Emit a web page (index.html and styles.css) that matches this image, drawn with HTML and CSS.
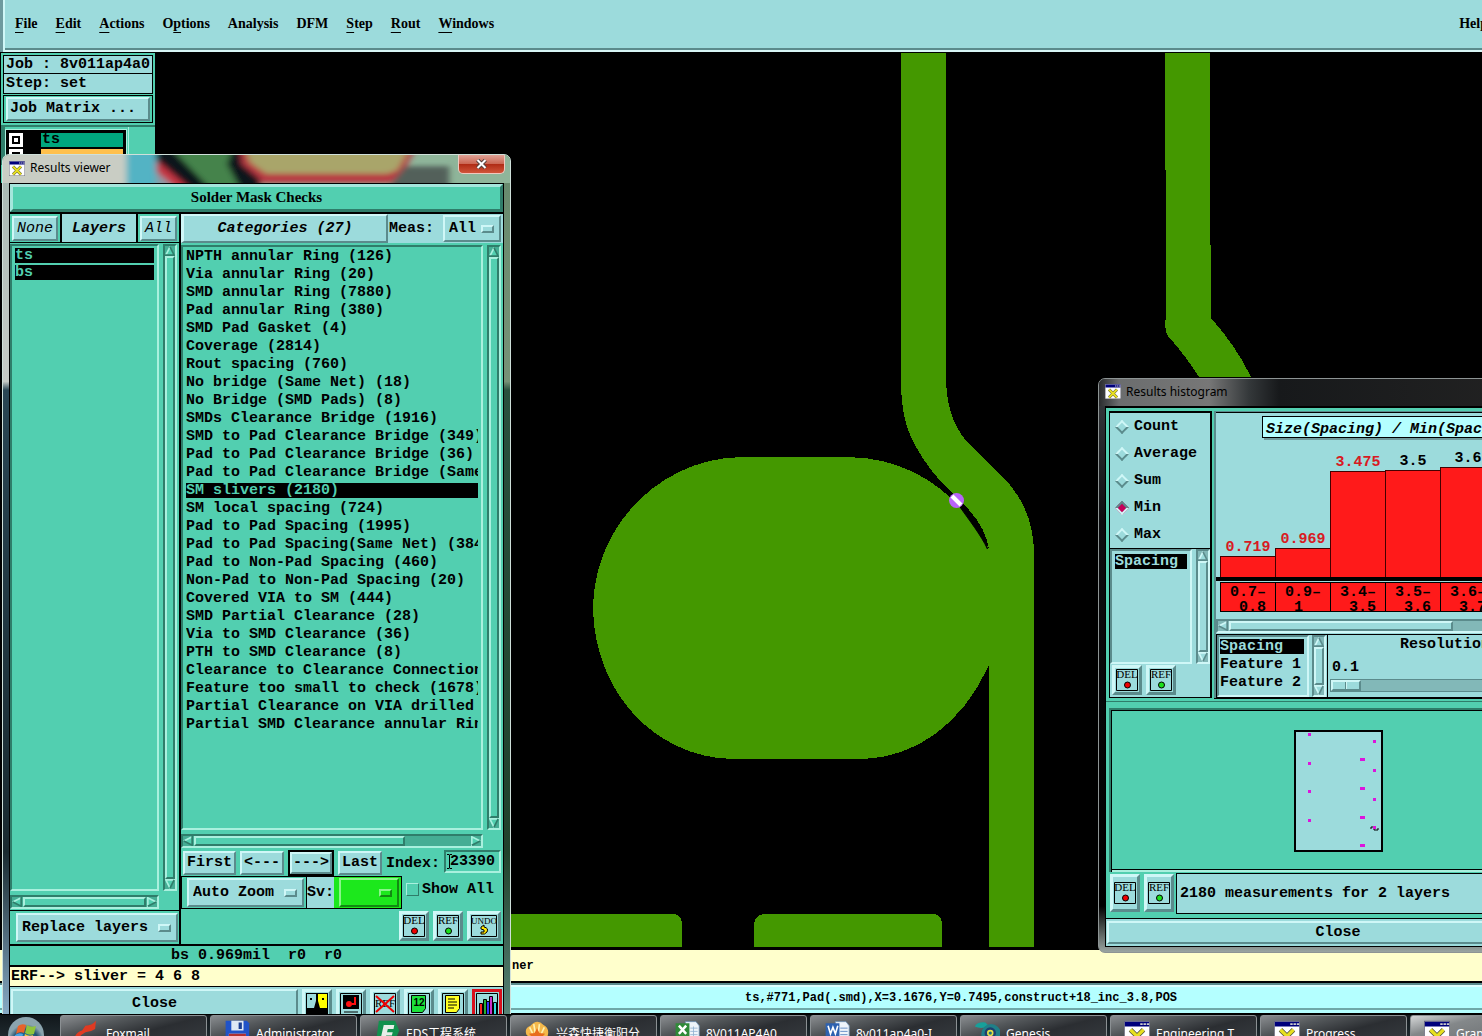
FILE: index.html
```html
<!DOCTYPE html>
<html lang="en">
<head>
<meta charset="utf-8">
<title>Results viewer</title>
<link rel="stylesheet" href="styles.css">
</head>
<body>
<svg class="defs" aria-hidden="true">
  <symbol id="up" viewBox="0 0 12 12"><path d="M6 0 12 12H0z" fill="var(--bg)"/><path d="M6 1 1 11" stroke="var(--hi)" stroke-width="2"/><path d="M6 1 11 11H0" stroke="var(--lo)" stroke-width="2" fill="none"/></symbol>
  <symbol id="down" viewBox="0 0 12 12"><path d="M0 0H12L6 12z" fill="var(--bg)"/><path d="M6 11 1 1H12" stroke="var(--hi)" stroke-width="2" fill="none"/><path d="M6 11 11 1" stroke="var(--lo)" stroke-width="2"/></symbol>
  <symbol id="left" viewBox="0 0 12 12"><path d="M0 6 12 0V12z" fill="var(--bg)"/><path d="M1 6 11 1" stroke="var(--hi)" stroke-width="2"/><path d="M1 6 11 11V0" stroke="var(--lo)" stroke-width="2" fill="none"/></symbol>
  <symbol id="right" viewBox="0 0 12 12"><path d="M12 6 0 0V12z" fill="var(--bg)"/><path d="M11 6 1 1V12" stroke="var(--hi)" stroke-width="2" fill="none"/><path d="M11 6 1 11" stroke="var(--lo)" stroke-width="2"/></symbol>
  <symbol id="xwin" viewBox="0 0 32 30"><path d="M0 0H32V30H0z" fill="#fff" stroke="#667" stroke-width="2"/><path d="M1 1H31V7H1z" fill="#00007c"/><path d="M20 3h3v2h-3zM24 3h3v2h-3zM28 3h3v2h-3z" fill="#ccc"/><path d="M8 11 24 27M24 11 8 27" stroke="#554" stroke-width="6"/><path d="M8 11 24 27M24 11 8 27" stroke="#e8e020" stroke-width="4"/></symbol>
</svg>
<div class="desktop">
  <nav class="menubar">
    <a href="#"><u>F</u>ile</a><a href="#"><u>E</u>dit</a><a href="#"><u>A</u>ctions</a><a href="#">O<u>p</u>tions</a><a href="#">Analysis</a><a href="#">DFM</a><a href="#"><u>S</u>tep</a><a href="#"><u>R</u>out</a><a href="#"><u>W</u>indows</a><a href="#" class="help">Help</a>
  </nav>

  <main class="stage">
    <svg class="board" viewBox="0 52 1482 897" preserveAspectRatio="xMinYMin slice" aria-label="Board view">
      <g fill="#449800" shape-rendering="crispEdges">
        <path d="M901 53H946V380C947 410 955 430 971 446L1001 475C1023 497 1034 522 1034 555V947H989V549C987 535 979 519 960 500C944 485 933 475 919 452C906 432 901 410 901 380z"/>
        <path d="M742 457H848C915 458 962 497 989 549V665C962 725 915 757 864 759H732C653 757 594 690 593 608C594 526 660 458 742 457z"/>
        <path d="M1165 53H1210V169L1211 318C1226 335 1240 354 1251 377H1199Q1185 355 1168 336Q1165 331 1165 322L1166 318V170H1165z"/>
        <path d="M500 914H672Q682 914 682 924V947H500z"/>
        <path d="M754 947V926Q754 914 766 914H932Q942 914 942 924V947z"/>
      </g>
      <path d="M961 505C976 520 982 530 987.500 549C981 535 969 520 960 507z" fill="#000" stroke="#000"/>
      <circle cx="956.500" cy="500.500" r="7.500" fill="#b964fa"/><path d="M952 496 961 505" stroke="#fff" stroke-width="4"/>
    </svg>

    <aside class="jobpanel green">
      <p class="jobline">Job : 8v011ap4a0</p>
      <p class="jobline">Step: set</p>
      <div class="matrix"><button class="btn cyan">Job Matrix ...</button></div>
      <div class="layerbox">
        <ul class="layerlist">
          <li><i class="tick"></i><span class="swatch teal">ts</span></li>
          <li><i class="tick"></i><span class="swatch amber"></span></li>
        </ul>
      </div>
    </aside>
  </main>

  <section class="window viewer">
    <header class="titlebar">
      <svg class="glass" viewBox="0 0 509 30" preserveAspectRatio="none" aria-hidden="true">
        <defs><filter id="soft" x="-10%" y="-50%" width="120%" height="200%"><feGaussianBlur stdDeviation="3"/></filter></defs>
        <path d="M0 0H509V30H0z" fill="#8fb59a"/>
        <g filter="url(#soft)"><path d="M-10-10H124V40H-10z" fill="#c9cdc4"/><path d="M124-10H154V40H124z" fill="#52b3c4"/><path d="M154-10H236L246 40H154z" fill="#45834b"/><path d="M154 10 182 36H154z" fill="#8b9aa6"/><path d="M154 2 192 36H174L154 18z" fill="#c43443"/><path d="M154-10H166L210 38H190L154 5z" fill="#10151b"/><path d="M232-10H416L400 22 388 30H254L238 10z" fill="#b83842"/><path d="M242-10H410L396 16 386 20H264L248 8z" fill="#a9a56b"/><path d="M230-6H238L240 10 258 26V40H240L225 10z" fill="#11141a"/><path d="M404 12H448V38H384z" fill="#53605a"/></g>
      </svg>
      <svg class="appicon"><use href="#xwin"/></svg><h2>Results viewer</h2>
      <button class="closer" aria-label="Close window"><svg viewBox="0 0 12 10"><path d="M2 1 10 9M10 1 2 9" stroke="#54403c" stroke-width="4"/><path d="M2 1 10 9M10 1 2 9" stroke="#fff" stroke-width="2"/></svg></button>
    </header>
    <div class="viewbody green">
      <div class="bar checks"><h3>Solder Mask Checks</h3></div>
      <div class="split">
        <div class="layers">
          <div class="tabs">
            <span class="tab"><button class="btn cyan slim">None</button></span>
            <strong>Layers</strong>
            <span class="tab"><button class="btn cyan slim">All</button></span>
          </div>
          <div class="scrollgrid">
            <ul class="list"><li class="on">ts</li><li class="on">bs</li></ul>
            <div class="scroll vert"><svg><use href="#up"/></svg><i></i><svg><use href="#down"/></svg></div>
            <div class="scroll horz"><svg><use href="#left"/></svg><i></i><svg><use href="#right"/></svg></div>
          </div>
          <div class="replace"><label class="pick cyan"><select aria-label="Layer mode"><option>Replace layers</option></select></label></div>
        </div>
        <div class="cats">
          <div class="cathead">
            <button class="btn cyan heading">Categories (27)</button>
            <label for="meas">Meas:</label>
            <span class="pick cyan"><select id="meas"><option>All</option></select></span>
          </div>
          <div class="scrollgrid wide">
            <ul class="list">
              <li>NPTH annular Ring (126)</li><li>Via annular Ring (20)</li><li>SMD annular Ring (7880)</li><li>Pad annular Ring (380)</li><li>SMD Pad Gasket (4)</li><li>Coverage (2814)</li><li>Rout spacing (760)</li><li>No bridge (Same Net) (18)</li><li>No Bridge (SMD Pads) (8)</li><li>SMDs Clearance Bridge (1916)</li><li>SMD to Pad Clearance Bridge (349)</li><li>Pad to Pad Clearance Bridge (36)</li><li>Pad to Pad Clearance Bridge (Same</li><li class="on">SM slivers (2180)</li><li>SM local spacing (724)</li><li>Pad to Pad Spacing (1995)</li><li>Pad to Pad Spacing(Same Net) (384</li><li>Pad to Non-Pad Spacing (460)</li><li>Non-Pad to Non-Pad Spacing (20)</li><li>Covered VIA to SM (444)</li><li>SMD Partial Clearance (28)</li><li>Via to SMD Clearance (36)</li><li>PTH to SMD Clearance (8)</li><li>Clearance to Clearance Connection</li><li>Feature too small to check (1678)</li><li>Partial Clearance on VIA drilled</li><li>Partial SMD Clearance annular Rin</li>
            </ul>
            <div class="scroll vert"><svg><use href="#up"/></svg><i></i><svg><use href="#down"/></svg></div>
            <div class="scroll horz part"><svg><use href="#left"/></svg><i></i><svg><use href="#right"/></svg></div>
          </div>
          <div class="steps">
            <button class="btn cyan">First</button><button class="btn cyan">&lt;---</button><button class="btn cyan default">---&gt;</button><button class="btn cyan">Last</button>
            <label for="index">Index:</label><span class="entry"><input id="index" type="text" value="23390"><svg class="beam" width="5" height="15" aria-hidden="true"><path d="M0 .5h2l.5.5.5-.5h2M2.500 1v13M0 14.500h2l.5-.5.5.5h2" fill="none" stroke="#000"/></svg></span>
          </div>
          <div class="options">
            <span class="optbox"><label class="pick cyan"><select aria-label="Zoom mode"><option>Auto Zoom</option></select></label></span>
            <span class="optbox sv"><label for="sv">Sv:</label><span class="pick lime"><select id="sv"><option></option></select></span></span>
            <label class="showall"><input type="checkbox">Show All</label>
          </div>
          <div class="actions">
            <button class="iconbtn cyan" aria-label="Delete"><svg width="22" height="22"><path d="M.5.5h21v21H.5z" fill="none" stroke="#000"/><text x="11" y="9" class="glyph">DEL</text><circle cx="11.500" cy="16" r="3" fill="#e00" stroke="#000"/></svg></button>
            <button class="iconbtn cyan" aria-label="Reference"><svg width="22" height="22"><path d="M.5.5h21v21H.5z" fill="none" stroke="#000"/><text x="11" y="9" class="glyph">REF</text><circle cx="11.500" cy="16" r="3" fill="#1be01b" stroke="#000"/></svg></button>
            <button class="iconbtn cyan" aria-label="Undo last"><svg width="26" height="22"><path d="M.5.5h25v21H.5z" fill="none" stroke="#000"/><text x="13" y="9" class="glyph tight">UNDO</text><path d="M10 12 13 10V12Q18 13 16 17Q14 20 10 19V17H13V15L10 14z" fill="#ffe600" stroke="#000"/></svg></button>
          </div>
        </div>
      </div>
      <p class="info">bs 0.969mil&nbsp; r0&nbsp; r0</p>
      <p class="erf">ERF--&gt; sliver = 4 6 8</p>
      <div class="footer cyan">
        <button class="btn cyan closebtn">Close</button>
        <button class="iconbtn" aria-label="View"><svg width="22" height="22"><path d="M0 0h22v22H0z"/><path d="M1 1h9v7L8 15H1z" fill="#9cdbdc"/><path d="M12 1h9v14h-7l-2-7z" fill="#ff0"/><path d="M4 5h2v2H4zM16 5h2v2h-2z"/></svg></button>
        <button class="iconbtn" aria-label="Record"><svg width="22" height="22"><path d="M.5.5h21v21H.5z" fill="none" stroke="#000"/><path d="M3 2h16v14H3z"/><circle cx="9" cy="11" r="3" fill="#f11"/><path d="M12 11h3V4" stroke="#f11" stroke-width="2" fill="none"/><path d="M4 19h14" stroke="#000"/></svg></button>
        <button class="iconbtn" aria-label="Clear reference"><svg width="22" height="22"><path d="M.5.5h21v21H.5z" fill="none" stroke="#000"/><text x="11" y="14" class="glyph">REF</text><path d="M2 3 20 19M20 3 2 19" stroke="#e00" stroke-width="2"/></svg></button>
        <button class="iconbtn" aria-label="Numbers"><svg width="22" height="22"><path d="M.5.5h21v21H.5z" fill="none" stroke="#000"/><path d="M3.500 2.500h14v13l-3 4h-11z" fill="#1be23a" stroke="#000"/><text x="11" y="13" class="glyph num">12</text></svg></button>
        <button class="iconbtn" aria-label="Notes"><svg width="22" height="22"><path d="M.5.5h21v21H.5z" fill="none" stroke="#000"/><path d="M3.500 2.500h14v13l-3 4h-11z" fill="#ff2" stroke="#000"/><path d="M6 6h7M6 9h9M6 12h9M6 15h6" stroke="#000"/></svg></button>
        <button class="iconbtn hot" aria-label="Histogram"><svg width="22" height="22"><path d="M.5.5h21v21H.5z" fill="none" stroke="#000"/><path d="M3.500 10.500h3V22h-3z" fill="#f22" stroke="#000"/><path d="M7.500 6.500h3V22h-3z" fill="#22b032" stroke="#000"/><path d="M10.500 8.500h3V22h-3z" fill="#33f" stroke="#000"/><path d="M13.500 3.500h3V22h-3z" fill="#c3c" stroke="#000"/><path d="M17.500 9.500h3V22h-3z" fill="#3dd" stroke="#000"/></svg></button>
      </div>
    </div>
  </section>

  <section class="window histo">
    <header class="titlebar"><svg class="appicon"><use href="#xwin"/></svg><h2>Results histogram</h2></header>
    <div class="histobody green">
      <div class="upper">
        <div class="side cyan">
          <fieldset>
            <label><input type="radio" name="stat">Count</label>
            <label><input type="radio" name="stat">Average</label>
            <label><input type="radio" name="stat">Sum</label>
            <label><input type="radio" name="stat" checked>Min</label>
            <label><input type="radio" name="stat">Max</label>
          </fieldset>
          <div class="minilist">
            <ul class="list"><li class="on">Spacing</li></ul>
            <div class="scroll vert"><svg><use href="#up"/></svg><i></i><svg><use href="#down"/></svg></div>
          </div>
          <div class="pair">
            <button class="iconbtn" aria-label="Delete"><svg width="22" height="22"><path d="M.5.5h21v21H.5z" fill="none" stroke="#000"/><text x="11" y="9" class="glyph">DEL</text><circle cx="11.500" cy="16" r="3" fill="#e00" stroke="#000"/></svg></button>
            <button class="iconbtn" aria-label="Reference"><svg width="22" height="22"><path d="M.5.5h21v21H.5z" fill="none" stroke="#000"/><text x="11" y="9" class="glyph">REF</text><circle cx="11.500" cy="16" r="3" fill="#1be01b" stroke="#000"/></svg></button>
          </div>
        </div>
        <div class="plot cyan">
          <div class="chart">
            <p class="caption">Size(Spacing) / Min(Spacing)</p>
            <div class="bars">
              <div class="col"><b>0.719</b><i style="height:21px"></i></div>
              <div class="col"><b>0.969</b><i style="height:29px"></i></div>
              <div class="col"><b>3.475</b><i style="height:106px"></i></div>
              <div class="col dark"><b>3.5</b><i style="height:107px"></i></div>
              <div class="col dark"><b>3.6</b><i style="height:110px"></i></div>
            </div>
            <div class="ranges"><span>0.7–<br>&nbsp;0.8</span><span>0.9–<br>1&nbsp;</span><span>3.4–<br>&nbsp;3.5</span><span>3.5–<br>&nbsp;3.6</span><span>3.6–<br>&nbsp;3.7</span></div>
          </div>
          <div class="scroll horz hs"><svg><use href="#left"/></svg><i></i><svg><use href="#right"/></svg></div>
          <div class="lower">
            <ul class="list"><li class="on">Spacing</li><li>Feature 1</li><li>Feature 2</li></ul>
            <div class="scroll vert"><svg><use href="#up"/></svg><i></i><svg><use href="#down"/></svg></div>
            <div class="res"><label for="res">Resolution</label><output for="res">0.1</output><input id="res" type="range" value="0"></div>
          </div>
        </div>
      </div>
      <div class="mapbox">
        <svg class="map" width="89" height="122" aria-label="Panel map"><path d="M1 1H88V121H1z" fill="#9cdbdc" stroke="#000" stroke-width="2"/>
          <path d="M14 3h3v3h-3zM14 32h3v3h-3zM14 60h3v3h-3zM14 89h3v3h-3zM79 10h3v3h-3zM79 39h3v3h-3zM79 68h3v3h-3zM79 96h3v3h-3zM66 28h5v3h-5zM66 57h5v3h-5zM66 86h5v3h-5zM66 114h5v3h-5z" fill="#dc14dc"/><path d="M77 99v-2h2M80 99v1h4v-2" fill="none" stroke="#000"/></svg>
      </div>
      <div class="report">
        <button class="iconbtn cyan" aria-label="Delete"><svg width="22" height="22"><path d="M.5.5h21v21H.5z" fill="none" stroke="#000"/><text x="11" y="9" class="glyph">DEL</text><circle cx="11.500" cy="16" r="3" fill="#e00" stroke="#000"/></svg></button>
        <button class="iconbtn cyan" aria-label="Reference"><svg width="22" height="22"><path d="M.5.5h21v21H.5z" fill="none" stroke="#000"/><text x="11" y="9" class="glyph">REF</text><circle cx="11.500" cy="16" r="3" fill="#1be01b" stroke="#000"/></svg></button>
        <p>2180 measurements for 2 layers</p>
      </div>
      <div class="closerow cyan"><button class="btn">Close</button></div>
    </div>
  </section>

  <p class="prompt">ner</p>
  <p class="status">ts,#771,Pad(.smd),X=3.1676,Y=0.7495,construct+18_inc_3.8,POS</p>

  <footer class="taskbar">
    <button class="start" aria-label="Start"><svg width="38" height="38" viewBox="0 0 38 38"><defs><radialGradient id="orb" cy=".7"><stop offset="0" stop-color="#1f8fc8"/><stop offset=".7" stop-color="#20506f"/><stop offset="1" stop-color="#8ba4ae"/></radialGradient></defs><circle cx="19" cy="19" r="18" fill="url(#orb)"/><path d="M11 10q4-3 8-1l-2 8q-4-2-8 1z" fill="#e8632b"/><path d="M20 9q4 3 9 1l-2 8q-5 2-9-1z" fill="#8fc43c"/><path d="M8 19q4-3 8-1l-2 8q-4-2-8 1z" fill="#4aa5e4"/><path d="M18 18q4 3 8 1l-2 8q-4 2-8-1z" fill="#fbc834"/></svg></button>
    <button class="task"><svg viewBox="0 0 32 32"><path d="M0 24Q2 15 10 13L14 7Q22 7 27 1L26 11Q20 15 14 15L8 19 12 26H2z" fill="#e03a22"/></svg>Foxmail</button>
    <button class="task"><svg viewBox="0 0 32 32"><path d="M2 1H28L31 4V31H2z" fill="#2053c8"/><path d="M9 1H24V13H9z" fill="#dfe9f5"/><path d="M18 3h4v8h-4z" fill="#1c3f92"/><path d="M6 17H27V31H6z" fill="#fff"/><path d="M6 17h21v3H6z" fill="#b03030"/></svg>Administrator</button>
    <button class="task"><svg viewBox="0 0 32 32"><path d="M6 1H26L31 13 24 30H2z" fill="#12914e"/><path d="M12 6H25L24 11H17L16 15H23L22 19H15L13 28H7z" fill="#e8eee9"/></svg>EDS工程系统</button>
    <button class="task"><svg viewBox="0 0 32 32"><path d="M3 18Q0 10 8 7Q16-2 24 6Q32 10 29 20L16 30z" fill="#f4b84a"/><path d="M16 28 7 9M16 28 12 5M16 28 19 5M16 28 25 9" stroke="#fff0b0" stroke-width="2"/><path d="M16 10 19 16 26 17 21 22 22 29 16 26 10 29 11 22 6 17 13 16z" fill="#e86c1c"/></svg>兴森快捷衡阳分</button>
    <button class="task"><svg viewBox="0 0 32 32"><path d="M14 2H27L31 7V30H14z" fill="#eef4fa" stroke="#6f93b8"/><path d="M20 10h9M20 14h9M20 18h9M24 8v20" stroke="#8fb0d0"/><path d="M2 4H19V20H2z" fill="#2f8a38"/><path d="M6 7 15 17M15 7 6 17" stroke="#fff" stroke-width="3"/></svg>8V011AP4A0...</button>
    <button class="task"><svg viewBox="0 0 32 32"><path d="M14 2H27L31 7V30H14z" fill="#eef4fa" stroke="#6f93b8"/><path d="M20 10h9M20 14h9M20 18h9" stroke="#4d7dbb"/><path d="M2 4H19V20H2z" fill="#2e62b0"/><path d="M5 7 8 17 11 9 14 17 17 7" stroke="#fff" stroke-width="2" fill="none"/></svg>8v011ap4a0-I...</button>
    <button class="task"><svg viewBox="0 0 32 32"><path d="M1 8Q4 2 14 3L18 7Q10 12 1 8z" fill="#17a09a"/><circle cx="21" cy="17" r="12" fill="#1f7f88"/><circle cx="20" cy="16" r="7" fill="#1d3f70"/><circle cx="20" cy="16" r="4" fill="#e2e04a"/><circle cx="20" cy="16" r="2" fill="#21707c"/></svg>Genesis</button>
    <button class="task"><svg viewBox="0 0 32 30"><use href="#xwin"/></svg>Engineering T...</button>
    <button class="task"><svg viewBox="0 0 32 30"><use href="#xwin"/></svg>Progress</button>
    <button class="task lit"><svg viewBox="0 0 32 30"><use href="#xwin"/></svg>Graphic</button>
  </footer>
</div>
</body>
</html>
```

FILE: styles.css
```css
*, *::after { box-sizing: border-box; }
body { margin: 0; background: #000; color: #000; font: bold 15px/18px "Liberation Mono", monospace; }
p, h2, h3, ul, fieldset { margin: 0; padding: 0; border: 0; font: inherit; list-style: none; }
button, input, select { font: inherit; color: inherit; margin: 0; padding: 0; border: 0; border-radius: 0; background: none; }
.defs { display: none; }
.green { --bg: #52cfb0; --hi: #a9f0de; --lo: #2f7d6a; --trough: #45ad94; background: var(--bg); }
.cyan { --bg: #9cdbdc; --hi: #cff7f7; --lo: #5b8b8c; --trough: #82b8b8; background: var(--bg); }
.lime { --bg: #1ce81c; --hi: #8af58a; --lo: #128a12; background: var(--bg); }

.desktop { position: relative; display: grid; grid-template: 52px minmax(0, 1fr) 34px 31px 22px / minmax(0, 1fr); height: 100vh; overflow: hidden; }

/* Menu bar */
.menubar { display: flex; gap: 18px; padding: 15px 0 0 12px; overflow: hidden; background: #9cdbdc; border-left: 3px solid #6d9a9e; box-shadow: inset 2px 0 #cff7f7, inset 0 -2px #d8f6f6, inset 0 -4px #5b8b8c; font: bold 14px/18px "Liberation Serif", serif; }
.menubar a { color: #000; text-decoration: none; white-space: nowrap; }
.menubar u { text-underline-offset: 4px; }
.menubar .help { margin: 0 -6px 0 auto; }

.stage { position: relative; background: #000; }
.board { position: absolute; inset: 0; width: 100%; height: 100%; }

/* Job panel */
.jobpanel { position: absolute; left: 1px; top: 1px; width: 154px; padding: 2px 2px 0; height: 130px; }
.jobline { height: 19px; padding: 0 2px; border: 1px solid #000; background: #9cdbdc; white-space: nowrap; }
.jobline + .jobline { border-top: 0; height: 20px; line-height: 20px; }
.matrix { margin-top: 1px; padding: 1px 2px; border: 1px solid #000; height: 28px; }
.matrix .btn { width: 100%; height: 24px; text-align: left; }
.layerbox { margin: 2px -2px 0; padding: 2px 28px 0 0; border-top: 2px solid #2f7d6a; border-left: 4px solid #2f7d6a; box-shadow: inset -26px 0 #52cfb0, inset -27px 0 #a9f0de; }
.layerlist { padding: 3px 3px 0; border: 1px solid #a9f0de; border-bottom: 0; background: #000; }
.layerlist li { display: flex; justify-content: space-between; height: 16px; }
.tick { width: 14px; height: 14px; border: 3px solid #fff; background: #fff; box-shadow: inset 0 0 0 2px #000; }
.swatch { width: 82px; height: 14px; padding-left: 1px; line-height: 14px; }
.teal { background: #00a67e; }
.amber { background: #ffc04d; }

/* Shared controls */
.btn { border: 2px solid; border-color: var(--hi) var(--lo) var(--lo) var(--hi); background: var(--bg); padding: 0 2px; white-space: nowrap; line-height: 18px; }
.iconbtn { width: 30px; height: 30px; flex: none; display: grid; place-items: center; border: 3px solid; border-color: var(--hi) var(--lo) var(--lo) var(--hi); background: var(--bg); }
.iconbtn svg { display: block; }
.glyph { font: 11px "Liberation Serif", serif; text-anchor: middle; fill: #000; }
.glyph.tight { font-size: 9px; }
.glyph.num { font: bold 10px "Liberation Sans", sans-serif; }
.pick { position: relative; display: block; border: 2px solid; border-color: var(--hi) var(--lo) var(--lo) var(--hi); }
.pick select { display: block; width: 100%; height: 100%; appearance: none; padding-left: 4px; outline: 0; }
.pick::after { content: ""; position: absolute; right: 5px; top: 50%; width: 13px; height: 8px; margin-top: -4px; border: 2px solid; border-color: var(--hi) var(--lo) var(--lo) var(--hi); pointer-events: none; }
.list { overflow: hidden; border: 2px solid; border-color: var(--lo) var(--hi) var(--hi) var(--lo); padding: 1px 3px; }
.list li { height: 18px; overflow: hidden; white-space: nowrap; }
.list .on { height: 15px; margin: 1px 0 2px; line-height: 15px; background: #000; color: var(--bg); }
.scroll { display: flex; border: 2px solid; border-color: var(--lo) var(--hi) var(--hi) var(--lo); background: var(--trough); }
.scroll svg { width: 10px; height: 10px; flex: none; }
.scroll i { flex: 1; background: var(--bg); border: 2px solid; border-color: var(--hi) var(--lo) var(--lo) var(--hi); }
.vert { flex-direction: column; width: 14px; }
.horz { height: 14px; gap: 1px; }
.horz.part i { margin-right: 65px; }

/* Windows */
.window { position: absolute; display: flex; flex-direction: column; border-radius: 7px 7px 0 0; overflow: hidden; }
.titlebar { position: relative; display: flex; align-items: center; flex: none; gap: 5px; padding: 0 0 2px 8px; }
.titlebar h2 { position: relative; font: 12px/18px "Noto Sans", "Open Sans", sans-serif; }
.glass { position: absolute; inset: 0; width: 100%; height: 100%; }
.appicon { position: relative; width: 16px; height: 15px; flex: none; }
.closer { position: relative; margin: 0 5px auto auto; width: 47px; height: 19px; display: grid; place-items: center; border: 1px solid #f0c8bf; border-top: 0; border-radius: 0 0 5px 5px; background: linear-gradient(#e0a296, #cc6854 48%, #b02c15 52%, #d0553a); }
.closer svg { width: 13px; height: 10px; }

/* Results viewer */
.viewer { left: 2px; top: 154px; bottom: 9px; width: 509px; padding: 0 6px; border: 1px solid #cfe0da; background: linear-gradient(90deg, transparent 50%, rgba(40, 90, 40, .5) 50%), linear-gradient(#a6b8b2, #c6cac6 26%, #2a4654 27%, #1a2a30 80%, #8fb4d0); }
.viewer .titlebar { height: 28px; margin: 0 -6px; padding-left: 6px; }
.viewbody { flex: 1; display: flex; flex-direction: column; min-height: 0; border: 1px solid #000; }
.checks { flex: none; height: 28px; border: 3px solid; border-color: #a5e6dc #2f7d6a #2f7d6a #a5e6dc; text-align: center; }
.checks h3 { font: bold 15px/20px "Liberation Serif", serif; }
.split { flex: 1; min-height: 0; display: grid; grid-template-columns: 171px minmax(0, 1fr); border: solid #000; border-width: 2px 0; }
.layers { display: flex; flex-direction: column; min-height: 0; border-right: 2px solid #000; }
.cats { display: flex; flex-direction: column; min-height: 0; }
.tabs { display: flex; flex: none; height: 29px; border-bottom: 1px solid #000; }
.tabs strong { flex: 1; border: solid #000; border-width: 0 2px; background: #9cdbdc; text-align: center; line-height: 29px; font-style: italic; }
.tab { padding: 2px; }
.tab .btn { height: 25px; padding: 0 3px; }
.slim { font-weight: normal; font-style: italic; }
.scrollgrid { flex: 1; min-height: 0; display: grid; grid-template: minmax(0, 1fr) 14px / minmax(0, 1fr) 14px; gap: 4px; padding: 1px 2px 1px 0; }
.scrollgrid.wide { padding: 2px 2px 2px 0; }
.cathead { display: flex; flex: none; height: 29px; background: #9cdbdc; }
.heading { width: 207px; font-style: italic; border-left-width: 3px; }
.cathead label { width: 53px; line-height: 30px; padding-left: 1px; }
.cathead .pick { flex: 1; margin: 1px 2px; }
.replace { flex: none; height: 34px; padding: 2px 1px 2px 6px; border-top: 1px solid #000; }
.replace .pick { height: 29px; }
.steps { display: flex; flex: none; gap: 4px; height: 26px; padding: 0 2px; }
.steps .btn { height: 24px; margin-top: 1px; }
.steps .default { height: 26px; margin-top: 0; outline: 2px solid #000; outline-offset: -2px; border-width: 4px; padding: 0 1px; line-height: 16px; }
.steps label { line-height: 27px; }
.entry { position: relative; flex: 1; min-width: 0; }
.entry input { display: block; width: 100%; height: 23px; padding-left: 4px; border: 2px solid; border-color: var(--lo) var(--hi) var(--hi) var(--lo); }
.beam { position: absolute; left: 3px; top: 4px; }
.options { display: flex; flex: none; height: 33px; }
.optbox { display: flex; width: 126px; border: 1px solid #000; padding: 1px 2px 1px 5px; }
.optbox .pick { flex: 1; }
.optbox.sv { width: 95px; padding: 0; border-left: 0; background: #1ce81c; }
.optbox.sv label { width: 27px; background: #9cdbdc; line-height: 32px; }
.optbox.sv .pick { margin: 1px 2px 1px 5px; }
.showall { display: flex; gap: 3px; padding: 5px 0 0 4px; white-space: nowrap; }
.showall input { appearance: none; width: 13px; height: 13px; margin-top: 2px; border: 1px solid; border-color: var(--hi) var(--lo) var(--lo) var(--hi); }
.actions { display: flex; flex: none; justify-content: flex-end; gap: 4px; height: 35px; padding: 2px; }
.actions .iconbtn:last-child { width: 34px; }
.info { flex: none; height: 19px; text-align: center; line-height: 20px; }
.erf { flex: none; height: 22px; padding-left: 1px; border: solid #000; border-width: 2px 0 1px; background: #ffffcc; line-height: 19px; }
.footer { display: flex; flex: none; gap: 4px; height: 38px; padding: 2px 1px; }
.footer .closebtn { flex: 1; height: 30px; }
.footer .hot { border-color: #d8101c; }

/* Results histogram */
.histo { left: 1098px; top: 378px; width: 480px; height: 575px; padding: 0 6px 5px; border: 1px solid #8d9494; border-radius: 7px; background: linear-gradient(#3a3e42, #0c0e10 25%, #000 92%, #9aa5a2); }
.histo .titlebar { height: 27px; margin: 0 -6px; padding-left: 6px; background: linear-gradient(90deg, #2a2c2e, #6b6d6e 20px, #777 110px, #34383a 150px, #17191b 180px, #222 420px); }
.histobody { flex: 1; min-height: 0; display: flex; flex-direction: column; border: 1px solid #000; border-top-width: 2px; }
.upper { display: flex; flex: none; height: 294px; padding: 3px 0 3px 3px; gap: 2px; border-bottom: 1px solid #2f7d6a; }
.side { width: 103px; display: flex; flex-direction: column; border: 1px solid #000; border-right-width: 2px; border-top-width: 2px; }
.side fieldset { height: 136px; border-bottom: 1px solid #000; }
.side fieldset label { display: flex; align-items: center; gap: 7px; height: 27px; padding-left: 7px; }
.side input { appearance: none; flex: none; width: 10px; height: 10px; rotate: 45deg; border: 2px solid; border-color: #cff7f7 #5b8b8c #5b8b8c #cff7f7; }
.side input:checked { background: #c3005a; border-color: #5b8b8c #cff7f7 #cff7f7 #5b8b8c; }
.minilist { display: flex; gap: 4px; height: 115px; }
.minilist .list { flex: 1; padding-top: 2px; }
.pair { display: flex; gap: 4px; padding: 1px 2px; }
.plot { flex: 1; min-width: 0; display: flex; flex-direction: column; border: 2px solid #5b8b8c; border-width: 1px 0 0 2px; box-shadow: 0 1px #000; }
.chart { height: 205px; display: flex; flex-direction: column; border-top: 1px solid #000; overflow: hidden; }
.caption { align-self: center; width: 262px; flex: none; margin-top: 3px; height: 22px; padding: 0 3px; border: 1px solid #000; background: #b4ffff; box-shadow: 2px 2px #6f9a9b; line-height: 26px; font-style: italic; white-space: nowrap; }
.bars { display: flex; flex: 1; align-items: flex-end; padding-left: 4px; border-bottom: 4px solid #000; }
.col { width: 56px; margin-right: -1px; text-align: center; color: #d81a22; }
.col b { display: block; line-height: 16px; }
.dark { color: #000; }
.col i { display: block; background: #ff1a1a; border: 1px solid #400; border-bottom: 0; }
.ranges { display: flex; flex: none; height: 30px; margin: 1px 0 5px 4px; }
.ranges span { width: 56px; height: 30px; margin-right: -1px; overflow: hidden; padding-top: 2px; border: 1px solid #000; background: #ff1a1a; text-align: center; line-height: 15px; }
.hs { margin: 2px 0 1px; }
.hs i { margin-right: 104px; }
.lower { display: flex; flex: 1; min-height: 0; border: solid #000; border-width: 1px 0 1px 1px; }
.lower .list { width: 92px; padding-left: 1px; }
.lower .scroll { margin: 0 1px 0 3px; }
.res { flex: 1; display: grid; grid-template-rows: 20px 24px 14px; border-left: 1px solid #000; padding-left: 2px; }
.res label { padding-right: 10px; text-align: center; line-height: 20px; }
.res output { padding-left: 2px; line-height: 26px; }
.res input { appearance: none; width: 100%; height: 13px; background: #82b8b8; border: 1px solid #5b8b8c; }
.res input::-webkit-slider-thumb { appearance: none; width: 30px; height: 11px; border: 2px solid; border-color: #cff7f7 #5b8b8c #5b8b8c #cff7f7; background: linear-gradient(90deg, #9cdbdc 12px, #5b8b8c 12px, #5b8b8c 13px, #cff7f7 13px, #cff7f7 14px, #9cdbdc 14px); }
.mapbox { flex: 1; display: grid; place-items: center; margin: 6px 0 0 3px; border: solid #2f7d6a; border-width: 2px 0 0 2px; box-shadow: inset 1px 1px #000, inset 0 -2px #a9f0de, inset 0 -3px #000; }
.mapbox svg { margin-right: 4px; }
.report { display: flex; flex: none; gap: 4px; height: 46px; padding: 1px 0 4px 4px; }
.report .iconbtn { height: 38px; margin-top: 1px; }
.report p { flex: 1; border: 1px solid #000; border-right: 0; margin-left: -2px; padding-left: 3px; background: #9cdbdc; line-height: 40px; }
.closerow { flex: none; height: 28px; padding: 2px 1px; border-top: 1px solid #000; }
.closerow .btn { width: 100%; height: 23px; }

/* Command and status lines */
.prompt { padding-left: 512px; border: solid #000; border-width: 1px 0 2px; background: #ffffcc; font-size: 12px; line-height: 32px; }
.status { padding-left: 745px; border: solid #5b8b8c; border-width: 2px 0 0; background: #b4ffff; box-shadow: inset 0 2px #dff, inset 0 -1px #000, inset 0 -4px #b4ffff, inset 0 -6px #6fa8a8; font-size: 12px; line-height: 26px; white-space: nowrap; }

/* Taskbar */
.taskbar { position: relative; z-index: 2; display: flex; align-items: flex-start; gap: 3px; overflow: hidden; background: linear-gradient(#11171b, #1f292e); border-top: 1px solid #000; }
.start { width: 57px; flex: none; padding-left: 7px; text-align: left; }
.start svg { display: block; margin-top: 1px; }
.task { display: flex; align-items: flex-start; flex: none; width: 147px; height: 40px; gap: 6px; padding: 0 4px 0 13px; overflow: hidden; border: 1px solid #8b9093; border-radius: 3px; background: linear-gradient(165deg, #8a8d90, #54585b 25%, #2b2e32 50%, #3c4146); color: #fff; font: 12px/36px "Noto Sans", "Noto Sans CJK SC", sans-serif; white-space: nowrap; }
.task svg { width: 26px; height: 30px; margin-top: 2px; flex: none; }
.lit { background: linear-gradient(165deg, #d5d7d8, #84888a 25%, #55595c); }
```
